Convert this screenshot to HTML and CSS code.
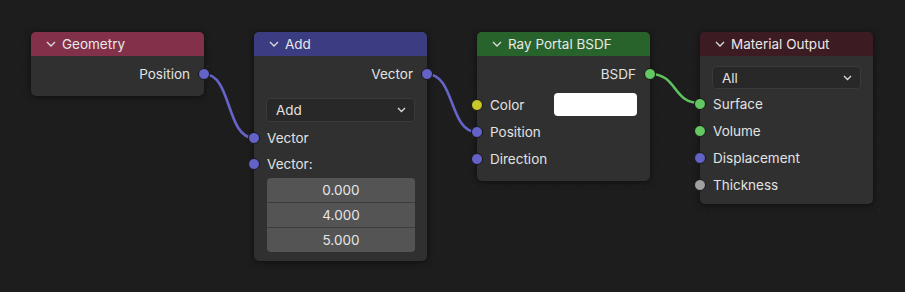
FILE: index.html
```html
<!DOCTYPE html>
<html lang="en">
<head>
    <meta charset="UTF-8">
    <title>Shader Editor</title>
    <link rel="stylesheet" href="styles.css">
</head>
<body>
    <div class="canvas">
        <svg class="links" width="905" height="292">
            <path class="link vector" d="M204 74 C232 74, 226 138, 254 138"/>
            <path class="link vector" d="M427 74 C455 74, 449 132, 477 132"/>
            <path class="link shader" d="M650 74 C678 74, 672 103, 700 103"/>
        </svg>

        <div class="node node-geometry">
            <div class="node-header geometry">
                <svg class="chevron" width="10" height="6" viewBox="0 0 10 6"><polyline points="1,1 5,5 9,1"/></svg>
                Geometry
            </div>
            <div class="node-body">
                <div class="row out">Position<span class="socket vector"></span></div>
            </div>
        </div>

        <div class="node node-add">
            <div class="node-header add">
                <svg class="chevron" width="10" height="6" viewBox="0 0 10 6"><polyline points="1,1 5,5 9,1"/></svg>
                Add
            </div>
            <div class="node-body">
                <div class="row out">Vector<span class="socket vector"></span></div>
                <div class="select add-select">
                    <span>Add</span>
                    <svg class="select-arrow" width="9" height="6" viewBox="0 0 9 6"><polyline points="1,1 4.5,4.5 8,1"/></svg>
                </div>
                <div class="row in short"><span class="socket vector"></span>Vector</div>
                <div class="row in short"><span class="socket vector"></span>Vector:</div>
                <div class="fields">
                    <div class="field">0.000</div>
                    <div class="field">4.000</div>
                    <div class="field">5.000</div>
                </div>
            </div>
        </div>

        <div class="node node-portal">
            <div class="node-header shader">
                <svg class="chevron" width="10" height="6" viewBox="0 0 10 6"><polyline points="1,1 5,5 9,1"/></svg>
                Ray Portal BSDF
            </div>
            <div class="node-body">
                <div class="row out">BSDF<span class="socket shader"></span></div>
                <div class="row in first"><span class="socket color"></span>Color<span class="swatch"></span></div>
                <div class="row in"><span class="socket vector"></span>Position</div>
                <div class="row in"><span class="socket vector"></span>Direction</div>
            </div>
        </div>

        <div class="node node-output">
            <div class="node-header output">
                <svg class="chevron" width="10" height="6" viewBox="0 0 10 6"><polyline points="1,1 5,5 9,1"/></svg>
                Material Output
            </div>
            <div class="node-body tight">
                <div class="select out-select">
                    <span>All</span>
                    <svg class="select-arrow" width="9" height="6" viewBox="0 0 9 6"><polyline points="1,1 4.5,4.5 8,1"/></svg>
                </div>
                <div class="row in"><span class="socket shader"></span>Surface</div>
                <div class="row in"><span class="socket shader"></span>Volume</div>
                <div class="row in"><span class="socket vector"></span>Displacement</div>
                <div class="row in"><span class="socket gray"></span>Thickness</div>
            </div>
        </div>
    </div>
</body>
</html>
```

FILE: styles.css
```css
body {
    margin: 0;
    background-color: #1d1d1d;
    font-family: Inter, "Noto Sans", sans-serif;
    font-size: 13.5px;
    color: #e2e2e2;
}
.canvas {
    position: relative;
    width: 905px;
    height: 292px;
    overflow: hidden;
    background-image: radial-gradient(circle, #242424 1px, transparent 1.2px);
    background-size: 24px 24px;
    background-position: 4px 6px;
}
.links {
    position: absolute;
    left: 0;
    top: 0;
}
.link {
    fill: none;
    stroke-width: 2.6;
}
.link.vector { stroke: #6565c9; }
.link.shader { stroke: #5fc25f; }

/* nodes */
.node {
    position: absolute;
    top: 32px;
    width: 173px;
    background-color: #303030;
    border-radius: 5px;
    box-shadow: 0 1px 6px rgba(0, 0, 0, 0.55);
}
.node-geometry { left: 31px; }
.node-add { left: 254px; }
.node-portal { left: 477px; }
.node-output { left: 700px; }

.node-header {
    height: 24px;
    display: flex;
    align-items: center;
    gap: 6px;
    padding-left: 15px;
    border-radius: 5px 5px 0 0;
    color: #e8e8e8;
    font-size: 13.5px;
}
.node-header.geometry { background-color: #83314a; }
.node-header.add { background-color: #3c3c83; }
.node-header.shader { background-color: #27632a; }
.node-header.output { background-color: #3c1b23; }
.chevron polyline,
.select-arrow polyline {
    fill: none;
    stroke: #dcdcdc;
    stroke-width: 1.3;
}

.node-body {
    display: flex;
    flex-direction: column;
    padding: 4px 0 9px;
}
.node-body.tight { padding-bottom: 6px; }
.row {
    position: relative;
    height: 27px;
    display: flex;
    align-items: center;
}
.row.short { height: 26px; }
.row.out {
    justify-content: flex-end;
    padding-right: 14px;
}
.row.in { padding-left: 13px; }
.row.first { margin-top: 4px; }

.socket {
    position: absolute;
    top: 50%;
    width: 10px;
    height: 10px;
    border: 1px solid #161616;
    border-radius: 50%;
    transform: translate(-50%, -50%);
}
.row.out .socket { left: 100%; }
.row.in .socket { left: 0; }
.socket.vector { background-color: #6363c7; }
.socket.shader { background-color: #63c763; }
.socket.color { background-color: #c7c729; }
.socket.gray { background-color: #a1a1a1; }

.swatch {
    margin-left: auto;
    margin-right: 13px;
    width: 83px;
    height: 23px;
    background-color: #ffffff;
    border-radius: 4px;
}

.select {
    display: flex;
    align-items: center;
    justify-content: space-between;
    margin: 0 12px;
    padding: 0 8px 0 9px;
    background-color: #282828;
    border: 1px solid #3a3a3a;
    border-radius: 4px;
    color: #e2e2e2;
}
.add-select {
    height: 22px;
    margin-top: 11px;
    margin-bottom: 3px;
}
.out-select {
    height: 21px;
    margin-top: 6px;
    margin-bottom: 1px;
}

.fields {
    margin: 1px 12px 0 13px;
    border-radius: 4px;
    overflow: hidden;
    background-color: #545454;
}
.field {
    height: 24px;
    display: flex;
    align-items: center;
    justify-content: center;
    color: #e6e6e6;
    border-top: 1px solid #3c3c3c;
}
.field:first-child { border-top: none; }
```
